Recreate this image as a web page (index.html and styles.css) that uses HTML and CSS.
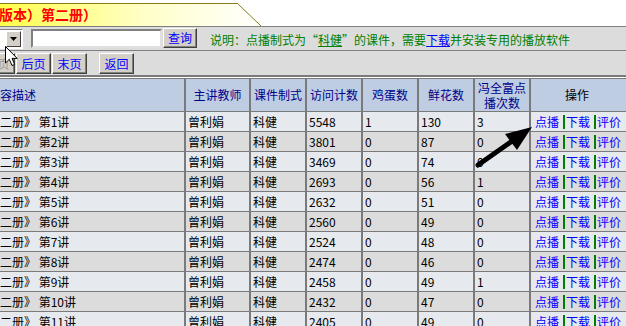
FILE: index.html
```html
<!DOCTYPE html>
<html>
<head>
<meta charset="utf-8">
<link rel="stylesheet" href="styles.css">
</head>
<body>
<div class="page">
  <div class="banner">
    <svg class="tab" width="270" height="26" viewBox="0 0 270 26">
      <defs>
        <linearGradient id="g" x1="0" x2="1" y1="0" y2="0">
          <stop offset="0" stop-color="#ffff4a"/>
          <stop offset="0.55" stop-color="#ffffc8"/>
          <stop offset="1" stop-color="#ffffff"/>
        </linearGradient>
      </defs>
      <path d="M0 3.5 H237 L261 26 H0 Z" fill="url(#g)"/>
      <path d="M0 3.5 H237.5 L261 26" fill="none" stroke="#8a7a1a" stroke-width="1"/>
    </svg>
    <span class="title">版本）第二册）</span>
  </div>
  <div class="toolbar">
    <div class="tb-row tb-row1">
      <div class="select"><span class="drop"><svg width="7" height="4" viewBox="0 0 7 4"><path d="M0 0H7L3.5 4Z" fill="#000"/></svg></span></div>
      <div class="input"></div>
      <span class="btn">查询</span>
      <span class="note">说明：点播制式为“<u>科健</u>”的课件，需要<a>下载</a>并安装专用的播放软件</span>
    </div>
    <div class="tb-row tb-row2">
      <span class="btn btn-cut disabled">前页</span>
      <span class="btn">后页</span>
      <span class="btn">末页</span>
      <span class="btn btn-back">返回</span>
    </div>
  </div>
  <table class="grid">
    <colgroup>
      <col class="c1"><col class="c2"><col class="c3"><col class="c4"><col class="c5"><col class="c6"><col class="c7"><col class="c8">
    </colgroup>
    <thead>
      <tr>
        <th class="left">容描述</th><th>主讲教师</th><th>课件制式</th><th>访问计数</th><th>鸡蛋数</th><th>鲜花数</th><th class="two">冯全富点<br>播次数</th><th class="ops-h">操作</th>
      </tr>
    </thead>
    <tbody>
      <tr class="odd"><td>二册》 第1讲</td><td>曾利娟</td><td>科健</td><td>5548</td><td>1</td><td>130</td><td>3</td><td class="ops"><a>点播</a><i></i><a>下载</a><i></i><a>评价</a></td></tr>
      <tr class="even"><td>二册》 第2讲</td><td>曾利娟</td><td>科健</td><td>3801</td><td>0</td><td>87</td><td>0</td><td class="ops"><a>点播</a><i></i><a>下载</a><i></i><a>评价</a></td></tr>
      <tr class="odd"><td>二册》 第3讲</td><td>曾利娟</td><td>科健</td><td>3469</td><td>0</td><td>74</td><td>0</td><td class="ops"><a>点播</a><i></i><a>下载</a><i></i><a>评价</a></td></tr>
      <tr class="even"><td>二册》 第4讲</td><td>曾利娟</td><td>科健</td><td>2693</td><td>0</td><td>56</td><td>1</td><td class="ops"><a>点播</a><i></i><a>下载</a><i></i><a>评价</a></td></tr>
      <tr class="odd"><td>二册》 第5讲</td><td>曾利娟</td><td>科健</td><td>2632</td><td>0</td><td>51</td><td>0</td><td class="ops"><a>点播</a><i></i><a>下载</a><i></i><a>评价</a></td></tr>
      <tr class="even"><td>二册》 第6讲</td><td>曾利娟</td><td>科健</td><td>2560</td><td>0</td><td>49</td><td>0</td><td class="ops"><a>点播</a><i></i><a>下载</a><i></i><a>评价</a></td></tr>
      <tr class="odd"><td>二册》 第7讲</td><td>曾利娟</td><td>科健</td><td>2524</td><td>0</td><td>48</td><td>0</td><td class="ops"><a>点播</a><i></i><a>下载</a><i></i><a>评价</a></td></tr>
      <tr class="even"><td>二册》 第8讲</td><td>曾利娟</td><td>科健</td><td>2474</td><td>0</td><td>46</td><td>0</td><td class="ops"><a>点播</a><i></i><a>下载</a><i></i><a>评价</a></td></tr>
      <tr class="odd"><td>二册》 第9讲</td><td>曾利娟</td><td>科健</td><td>2458</td><td>0</td><td>49</td><td>1</td><td class="ops"><a>点播</a><i></i><a>下载</a><i></i><a>评价</a></td></tr>
      <tr class="even"><td>二册》 第10讲</td><td>曾利娟</td><td>科健</td><td>2432</td><td>0</td><td>47</td><td>0</td><td class="ops"><a>点播</a><i></i><a>下载</a><i></i><a>评价</a></td></tr>
      <tr class="odd"><td>二册》 第11讲</td><td>曾利娟</td><td>科健</td><td>2405</td><td>0</td><td>49</td><td>0</td><td class="ops"><a>点播</a><i></i><a>下载</a><i></i><a>评价</a></td></tr>
    </tbody>
  </table>
  <svg class="cursor" width="14" height="24" viewBox="0 0 14 24">
    <path d="M0.5 0.5 V17 L4.3 13.3 L7 19.5 L9.6 18.4 L7 12.4 H12.2 Z" fill="#fff" stroke="#000" stroke-width="1"/>
  </svg>
  <svg class="arrow" width="70" height="50" viewBox="0 0 70 50">
    <path d="M3 39 L40 13" stroke="#000" stroke-width="5" stroke-linecap="round"/>
    <path d="M57 1 L30 8 L42 24 Z" fill="#000"/>
  </svg>
</div>
</body>
</html>
```
FILE: styles.css
```css
html, body {
  margin: 0;
  padding: 0;
  background: #ffffff;
  overflow: hidden;
}
.page {
  position: relative;
  width: 626px;
  height: 326px;
  overflow: hidden;
  font-family: "Noto Sans CJK SC", "DejaVu Sans", sans-serif;
  font-size: 12px;
}
.banner {
  position: relative;
  height: 26px;
  display: flex;
  align-items: center;
}
.tab {
  position: absolute;
  left: 0;
  top: 0;
}
.title {
  position: relative;
  color: #ff0000;
  font-size: 14px;
  font-weight: bold;
  margin-left: -1px;
  padding-top: 1px;
  letter-spacing: 0;
}
.toolbar {
  background: #dcdcdc;
  border-top: 1px solid #808080;
}
.tb-row {
  display: flex;
  align-items: center;
}
.tb-row1 {
  height: 23px;
  border-bottom: 1px solid #808080;
}
.tb-row2 {
  height: 23px;
  border-bottom: 2px solid #7a7a7a;
  padding-top: 1px;
}
.select {
  width: 20px;
  height: 16px;
  background: #fff;
  border: 1px solid;
  border-color: #808080 #ffffff #ffffff #808080;
  display: flex;
  justify-content: flex-end;
  align-items: stretch;
  padding: 1px;
  margin-left: -1px;
}
.drop {
  width: 15px;
  background: #d4d0c8;
  border: 1px solid;
  border-color: #ffffff #404040 #404040 #ffffff;
  box-sizing: border-box;
  display: flex;
  align-items: center;
  justify-content: center;
}
.input {
  width: 127px;
  height: 15px;
  margin-left: 8px;
  background: #fff;
  border: 2px solid;
  border-color: #808080 #e0e0e0 #e0e0e0 #808080;
}
.btn {
  display: inline-flex;
  align-items: center;
  justify-content: center;
  height: 20px;
  width: 34px;
  box-sizing: border-box;
  background: #d4d0c8;
  color: #0000ff;
  border: 1px solid;
  border-color: #ffffff #404040 #404040 #ffffff;
  box-shadow: inset -1px -1px 0 #808080;
  line-height: 1;
}
.tb-row1 .btn {
  margin-left: 1px;
  align-self: flex-start;
  margin-top: 1px;
}
.note {
  margin-left: 13px;
  color: #008000;
  white-space: nowrap;
  padding-top: 1px;
}
.note u {
  text-decoration: underline;
}
.note a {
  color: #0000ff;
  text-decoration: underline;
}
.btn-cut {
  margin-left: -20px;
}
.disabled {
  color: #9a9a9a;
}
.tb-row2 .btn {
  margin-right: 1px;
  height: 21px;
  width: 35px;
}
.tb-row2 .btn-back {
  margin-left: 11px;
}
.grid {
  border-collapse: collapse;
  table-layout: fixed;
  width: 640px;
  margin-top: 1px;
}
.c1 { width: 185px; }
.c2 { width: 65px; }
.c3 { width: 56px; }
.c4 { width: 56px; }
.c5 { width: 56px; }
.c6 { width: 56px; }
.c7 { width: 56px; }
.c8 { width: 110px; }
.grid th,
.grid td {
  border: 1px solid #7a7a7a;
  border-left-width: 2px;
  padding: 0 2px;
  white-space: nowrap;
  overflow: hidden;
}
.grid tr > :first-child {
  border-left: none;
  padding-left: 0;
}
.grid th {
  background: #bfcde3;
  color: #000088;
  font-weight: normal;
  height: 32px;
  line-height: 14px;
  text-align: center;
  padding-top: 0;
  padding-bottom: 0;
}
.grid th.two {
  line-height: 15px;
}
.grid th.left {
  text-align: left;
}
.grid th.ops-h {
  color: #000;
  text-align: left;
  padding-left: 34px;
}
.grid td {
  height: 19px;
  line-height: 19px;
  padding-top: 0;
  padding-bottom: 0;
  color: #000;
}
.grid tr.odd td {
  background: #e6e9ee;
}
.grid tr.even td {
  background: #dcdcdc;
}
.grid td.ops {
  padding-left: 4px;
}
.ops a {
  color: #0000ff;
}
.ops i {
  display: inline-block;
  width: 2px;
  height: 14px;
  background: #008000;
  margin: 0 1px 0 4px;
  vertical-align: -2px;
}
.cursor {
  position: absolute;
  left: 5px;
  top: 46px;
}
.arrow {
  position: absolute;
  left: 475px;
  top: 126px;
}
```
